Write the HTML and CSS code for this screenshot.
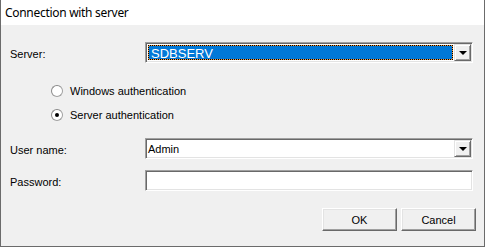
FILE: index.html
```html
<!DOCTYPE html>
<html>
<head>
<meta charset="utf-8">
<link rel="stylesheet" href="styles.css">
</head>
<body>
<div class="window">
  <div class="titlebar">Connection with server</div>
  <div class="content">
    <div class="row row-server">
      <span class="label">Server:</span>
      <div class="combo">
        <div class="combo-field focus-wrap"><span class="selected">SDBSERV</span></div>
        <div class="drop-btn"><span class="arrow"></span></div>
      </div>
    </div>
    <div class="radios">
      <label class="radio"><span class="circle"></span><span class="rtext">Windows authentication</span></label>
      <label class="radio"><span class="circle checked"></span><span class="rtext">Server authentication</span></label>
    </div>
    <div class="row row-user">
      <span class="label">User name:</span>
      <div class="combo">
        <div class="combo-field"><span class="plain">Admin</span></div>
        <div class="drop-btn"><span class="arrow"></span></div>
      </div>
    </div>
    <div class="row row-pass">
      <span class="label">Password:</span>
      <div class="textbox"></div>
    </div>
    <div class="buttons">
      <div class="btn">OK</div>
      <div class="btn">Cancel</div>
    </div>
  </div>
</div>
</body>
</html>
```
FILE: styles.css
```css
html, body {
  margin: 0;
  padding: 0;
  background: #f0f0f0;
}
.window {
  width: 485px;
  height: 247px;
  box-sizing: border-box;
  border-left: 1px solid #6b6b6b;
  border-right: 1px solid #6b6b6b;
  border-bottom: 1px solid #6b6b6b;
  background: #f0f0f0;
  display: flex;
  flex-direction: column;
  font-family: "Liberation Sans", Arial, sans-serif;
  font-size: 11px;
  color: #000;
}
.titlebar {
  height: 25px;
  background: #fff;
  font-family: "Noto Sans", "Open Sans", sans-serif;
  font-size: 12px;
  line-height: 25px;
  padding-left: 4px;
  letter-spacing: -0.3px;
}
.content {
  padding: 0 11px 0 9px;
  display: flex;
  flex-direction: column;
}
.row {
  display: flex;
  align-items: center;
  height: 21px;
}
.row-server { margin-top: 17px; }
.row-user { margin-top: 17px; }
.row-pass { margin-top: 11px; }
.label {
  width: 135px;
  flex: none;
  padding-top: 2px;
}
.combo, .textbox {
  width: 328px;
  height: 21px;
  box-sizing: border-box;
  border-top: 1px solid #a0a0a0;
  border-left: 1px solid #a0a0a0;
  border-right: 1px solid #fff;
  border-bottom: 1px solid #fff;
  box-shadow: inset 1px 1px 0 #696969, inset -1px -1px 0 #e3e3e3;
  background: #fff;
  display: flex;
  align-items: stretch;
  padding: 1px;
}
.combo-field {
  flex: 1;
  display: flex;
  align-items: stretch;
  padding: 1px 1px 1px 0;
}
.focus-wrap {
  background: #f79a3c;
  padding: 0;
  margin: 1px;
}
.selected {
  flex: 1;
  background: #0078d7;
  background-clip: padding-box;
  border: 1px dotted #000;
  color: #fff;
  font-size: 13px;
  line-height: 15px;
  padding-left: 2px;
}
.plain {
  line-height: 17px;
  padding-left: 1px;
}
.drop-btn {
  width: 17px;
  box-sizing: border-box;
  background: #f0f0f0;
  border-top: 1px solid #e3e3e3;
  border-left: 1px solid #e3e3e3;
  border-right: 1px solid #696969;
  border-bottom: 1px solid #696969;
  box-shadow: inset 1px 1px 0 #fff, inset -1px -1px 0 #a0a0a0;
  display: flex;
  align-items: center;
  justify-content: center;
}
.arrow {
  width: 0;
  height: 0;
  border-left: 4px solid transparent;
  border-right: 4px solid transparent;
  border-top: 4px solid #000;
  margin-top: 1px;
}
.radios {
  display: flex;
  flex-direction: column;
  gap: 12px;
  margin-top: 22px;
  padding-left: 41px;
}
.radio {
  display: flex;
  align-items: center;
  height: 12px;
}
.circle {
  width: 12px;
  height: 12px;
  box-sizing: border-box;
  border-radius: 50%;
  border: 1px solid #a0a0a0;
  border-top-color: #8a8a8a;
  border-left-color: #8a8a8a;
  background: #fff;
  position: relative;
  flex: none;
}
.circle.checked::after {
  content: "";
  position: absolute;
  left: 3px;
  top: 3px;
  width: 4px;
  height: 4px;
  border-radius: 50%;
  background: #000;
}
.rtext {
  margin-left: 7px;
}
.buttons {
  display: flex;
  justify-content: flex-end;
  gap: 4px;
  margin-top: 17px;
  margin-right: -3px;
}
.btn {
  width: 75px;
  height: 23px;
  box-sizing: border-box;
  background: #f0f0f0;
  border-top: 1px solid #fff;
  border-left: 1px solid #fff;
  border-right: 1px solid #696969;
  border-bottom: 1px solid #696969;
  box-shadow: inset -1px -1px 0 #a0a0a0, inset 1px 1px 0 #e3e3e3;
  display: flex;
  align-items: center;
  justify-content: center;
}
```
